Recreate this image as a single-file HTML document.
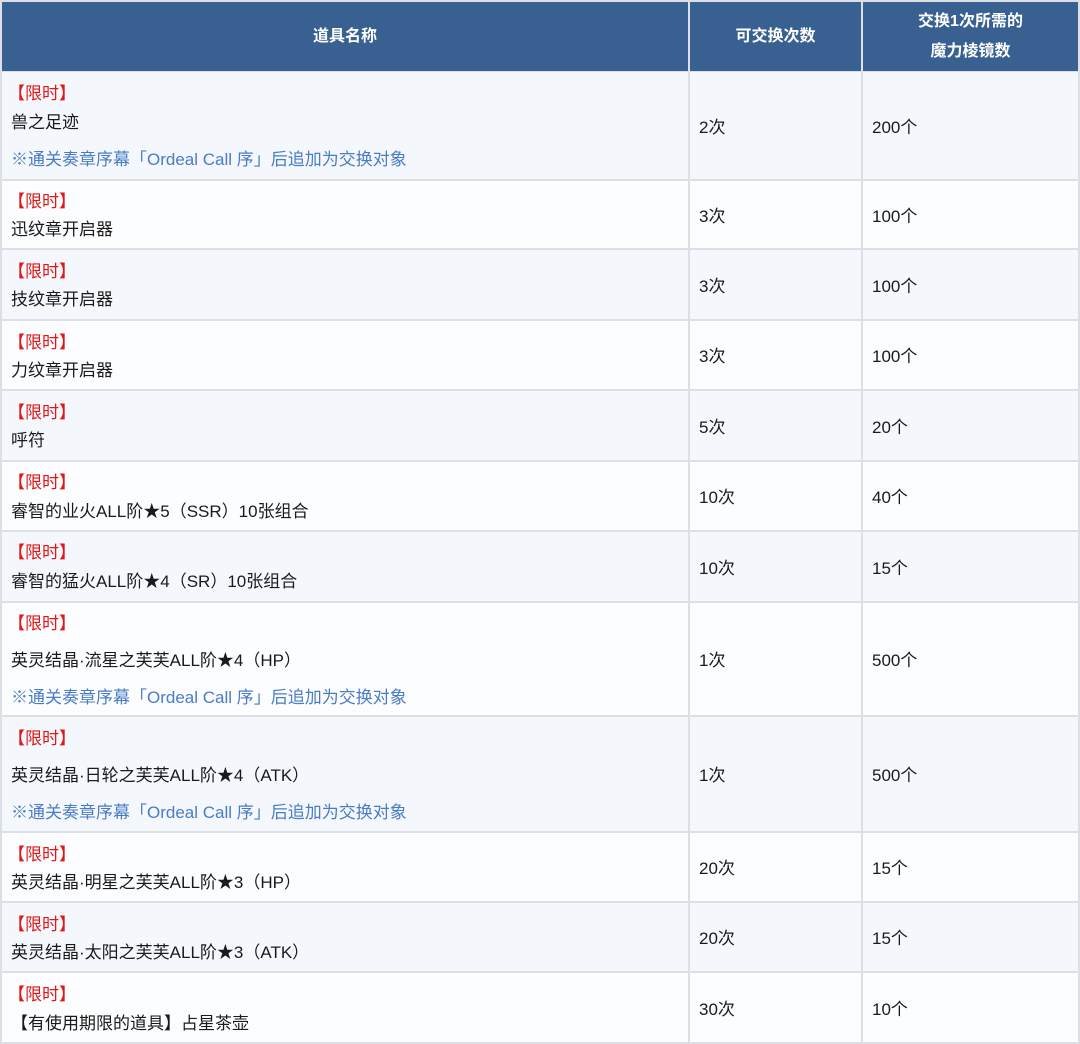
<!DOCTYPE html>
<html><head><meta charset="utf-8"><style>
body{margin:0;width:1080px;height:1044px;background:#dcdfe4;position:relative;overflow:hidden;font-family:"Liberation Sans","Noto Sans CJK SC",sans-serif;font-size:17px;color:#1a1a1a}
.c{position:absolute}
.h{background:#386192;color:#fff;font-weight:bold;text-align:center;display:flex;align-items:center;justify-content:center;line-height:30px;font-size:16px}
.t{position:absolute;white-space:nowrap;line-height:20px;transform:translateY(-8px)}
.r{color:#e01818}
.b{color:#4a7cc6}
</style></head><body>
<div class="c h" style="left:2px;top:2px;width:686px;height:69px">道具名称</div>
<div class="c h" style="left:690px;top:2px;width:171px;height:69px">可交换次数</div>
<div class="c h" style="left:863px;top:2px;width:215px;height:69px">交换1次所需的<br>魔力棱镜数</div>
<div id="rows"></div>
<script>
var R=[
[72,179,[[92,'【限时】','r'],[121,'兽之足迹',''],[158,'※通关奏章序幕「Ordeal Call 序」后追加为交换对象','b']],'2次','200个'],
[181,248,[[200,'【限时】','r'],[228,'迅纹章开启器','']],'3次','100个'],
[250,319,[[270,'【限时】','r'],[298,'技纹章开启器','']],'3次','100个'],
[321,389,[[341,'【限时】','r'],[369,'力纹章开启器','']],'3次','100个'],
[391,460,[[411,'【限时】','r'],[439,'呼符','']],'5次','20个'],
[462,530,[[481,'【限时】','r'],[510,'睿智的业火ALL阶★5（SSR）10张组合','']],'10次','40个'],
[532,601,[[551,'【限时】','r'],[580,'睿智的猛火ALL阶★4（SR）10张组合','']],'10次','15个'],
[603,715,[[622,'【限时】','r'],[659,'英灵结晶·流星之芙芙ALL阶★4（HP）',''],[696,'※通关奏章序幕「Ordeal Call 序」后追加为交换对象','b']],'1次','500个'],
[717,831,[[737,'【限时】','r'],[774,'英灵结晶·日轮之芙芙ALL阶★4（ATK）',''],[811,'※通关奏章序幕「Ordeal Call 序」后追加为交换对象','b']],'1次','500个'],
[833,901,[[853,'【限时】','r'],[881,'英灵结晶·明星之芙芙ALL阶★3（HP）','']],'20次','15个'],
[903,971,[[923,'【限时】','r'],[951,'英灵结晶·太阳之芙芙ALL阶★3（ATK）','']],'20次','15个'],
[973,1042,[[993,'【限时】','r'],[1022,'【有使用期限的道具】占星茶壶','']],'30次','10个']
];
var h='';
R.forEach(function(r,i){
var bg=i%2==0?'#f4f8fd':'#fcfdff',top=r[0],ht=r[1]-r[0],mid=top+ht/2;
h+='<div class="c" style="left:2px;top:'+top+'px;width:686px;height:'+ht+'px;background:'+bg+'"></div>';
h+='<div class="c" style="left:690px;top:'+top+'px;width:171px;height:'+ht+'px;background:'+bg+'"></div>';
h+='<div class="c" style="left:863px;top:'+top+'px;width:215px;height:'+ht+'px;background:'+bg+'"></div>';
r[2].forEach(function(l){h+='<div class="t '+l[2]+'" style="left:'+(l[2]=='r'?8:11)+'px;top:'+l[0]+'px">'+l[1]+'</div>';});
h+='<div class="t" style="left:699px;top:'+mid+'px">'+r[3]+'</div>';
h+='<div class="t" style="left:872px;top:'+mid+'px">'+r[4]+'</div>';
});
document.getElementById('rows').innerHTML=h;
</script>
</body></html>
